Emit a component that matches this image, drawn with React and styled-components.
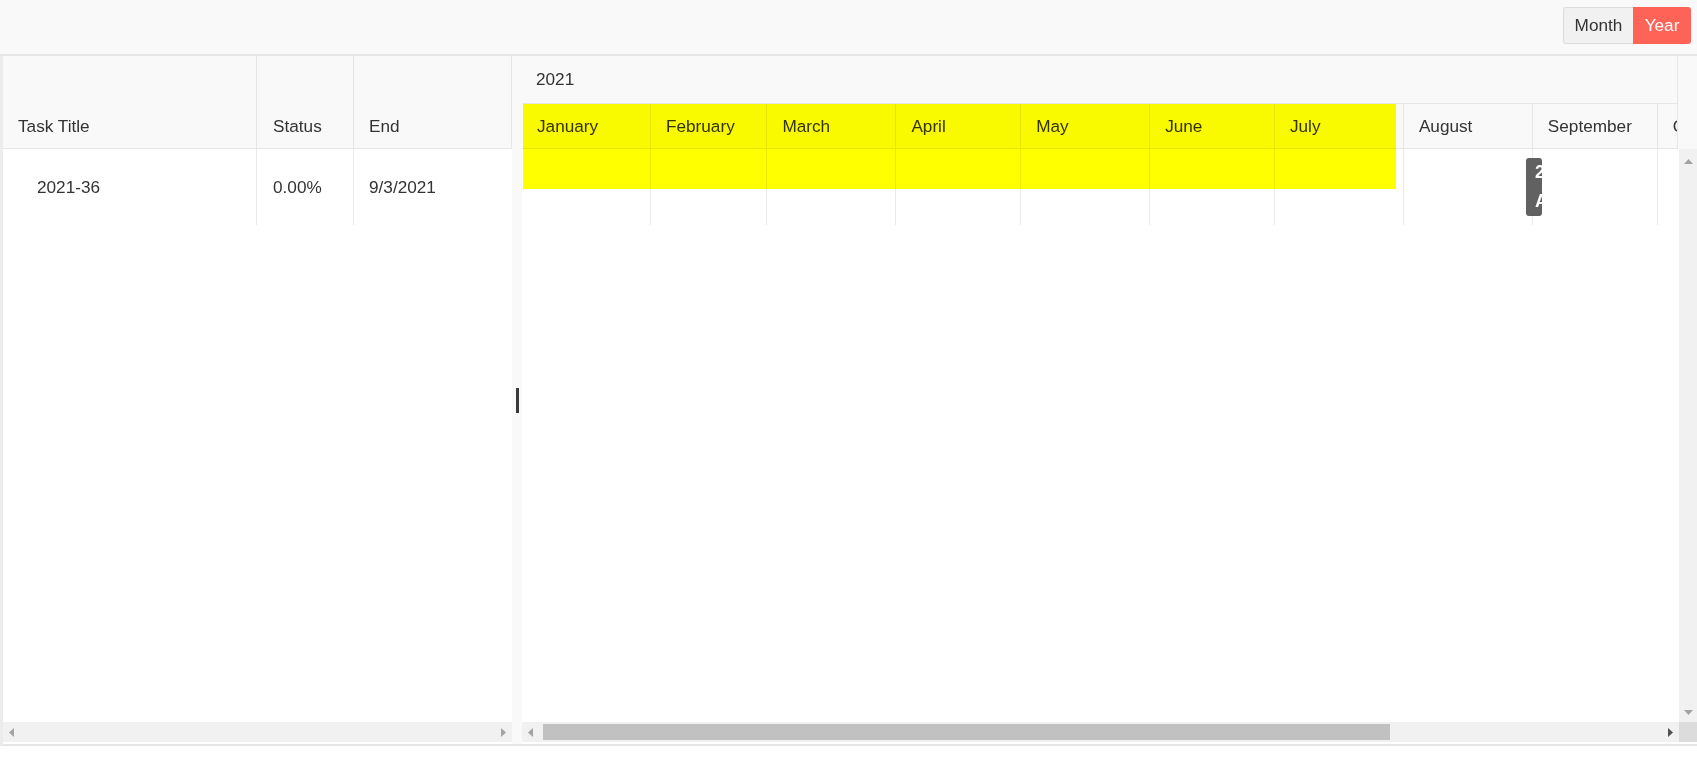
import React from "react";
import styled, { createGlobalStyle } from "styled-components";

const GlobalStyle = createGlobalStyle`
  html, body { margin: 0; padding: 0; background: #fff; }
  body {
    font-family: "Liberation Sans", Arial, sans-serif;
    font-size: 17.2px;
    color: #333;
  }
  * { box-sizing: border-box; }
`;

const PX_PER_DAY = 4.16;
const MONTHS = [
  ["January", 31], ["February", 28], ["March", 31], ["April", 30],
  ["May", 31], ["June", 30], ["July", 31], ["August", 31],
  ["September", 30], ["October", 31], ["November", 30], ["December", 31],
];

const Page = styled.div`
  width: 1697px;
`;

const Toolbar = styled.div`
  height: 56px;
  background: #f9f9f9;
  border-bottom: 2px solid #e6e6e6;
  display: flex;
  justify-content: flex-end;
  align-items: flex-start;
  padding: 7px 6px 0 0;
`;

const SegGroup = styled.div`
  display: flex;
  height: 37px;
`;

const SegButton = styled.div`
  display: flex;
  align-items: center;
  justify-content: center;
  width: ${(p) => p.$w}px;
  background: ${(p) => (p.$active ? "#ff6358" : "#f1f1f1")};
  color: ${(p) => (p.$active ? "#fff" : "#333")};
  border: ${(p) => (p.$active ? "none" : "1px solid #dcdcdc")};
  border-right: none;
  border-radius: ${(p) => (p.$active ? "0 3px 3px 0" : "3px 0 0 3px")};
`;

const Main = styled.div`
  display: flex;
  height: 690px;
  border-left: 3px solid #ececec;
  border-bottom: 2px solid #e6e6e6;
`;

const LeftPane = styled.div`
  width: 509px;
  display: flex;
  flex-direction: column;
  padding-bottom: 2px;
`;

const GridHeader = styled.div`
  height: 93px;
  display: flex;
  background: #f9f9f9;
  border-bottom: 1px solid #e6e6e6;
`;

const HeaderCell = styled.div`
  width: ${(p) => p.$w}px;
  display: flex;
  align-items: flex-end;
  padding: 0 0 12px ${(p) => p.$pad || 15}px;
  line-height: 20px;
  border-right: 1px solid #e6e6e6;
`;

const GridBody = styled.div`
  flex: 1;
  background: #fff;
`;

const GridRow = styled.div`
  height: 76px;
  display: flex;
`;

const GridCell = styled.div`
  width: ${(p) => p.$w}px;
  display: flex;
  align-items: center;
  padding-left: ${(p) => p.$pad || 15}px;
  border-right: ${(p) => (p.$last ? "none" : "1px solid #ebebeb")};
`;

const HScroll = styled.div`
  height: 20px;
  display: flex;
  background: #f1f1f1;
`;

const ArrowBtn = styled.div`
  width: 17px;
  display: flex;
  align-items: center;
  justify-content: center;
  flex-shrink: 0;
`;

const TrackFill = styled.div`
  flex: 1;
  display: flex;
  align-items: center;
`;

const Thumb = styled.div`
  width: 847px;
  height: 16px;
  margin-left: 4px;
  background: #c1c1c1;
`;

const Corner = styled.div`
  width: 18px;
  background: #dcdcdc;
`;

const Splitter = styled.div`
  width: 10px;
  background: #f9f9f9;
  display: flex;
  align-items: center;
  justify-content: center;
`;

const Handle = styled.div`
  width: 3px;
  height: 25px;
  background: #3a3a3a;
`;

const GanttPane = styled.div`
  flex: 1;
  position: relative;
  display: flex;
  flex-direction: column;
  padding-bottom: 2px;
  min-width: 0;
`;

const GanttHeader = styled.div`
  height: 93px;
  display: flex;
  background: #f9f9f9;
`;

const HeaderTimeline = styled.div`
  width: 1156px;
  border-right: 1px solid #e6e6e6;
  overflow: hidden;
  display: flex;
  flex-direction: column;
`;

const YearRow = styled.div`
  height: 48px;
  border-bottom: 1px solid #e6e6e6;
  display: flex;
  align-items: center;
  padding-left: 14px;
`;

const MonthRow = styled.div`
  height: 45px;
  border-bottom: 1px solid #e6e6e6;
  display: flex;
`;

const MonthCell = styled.div`
  flex-shrink: 0;
  display: flex;
  align-items: center;
  padding-left: 15px;
  border-right: 1px solid #e6e6e6;
  white-space: nowrap;
  overflow: hidden;
`;

const GanttBody = styled.div`
  flex: 1;
  display: flex;
  min-height: 0;
`;

const BodyCanvas = styled.div`
  width: 1157px;
  position: relative;
  overflow: hidden;
  background: #fff;
`;

const BodyRow = styled.div`
  height: 76px;
  display: flex;
`;

const BodyCell = styled.div`
  flex-shrink: 0;
  border-right: 1px solid #ebebeb;
`;

const VScroll = styled.div`
  width: 18px;
  background: #f1f1f1;
  display: flex;
  flex-direction: column;
  justify-content: space-between;
  align-items: center;
  padding: 10px 0 7px 1px;
`;

const Highlight = styled.div`
  position: absolute;
  left: 1px;
  top: 48px;
  width: 873px;
  height: 85px;
  background: #ffff00;
  mix-blend-mode: multiply;
  pointer-events: none;
`;

const TaskLabel = styled.div`
  position: absolute;
  left: 1004px;
  top: 9px;
  width: 16px;
  height: 58px;
  border-radius: 3px;
  background: #616161;
  color: #fff;
  font-weight: bold;
  font-size: 18px;
  line-height: 29px;
  padding-left: 9px;
  overflow: hidden;
  white-space: nowrap;
`;

const Tri = ({ dir, color = "#a3a3a3" }) => {
  const shapes = {
    left: { w: 5, h: 9, d: "M5 0 L0 4.5 L5 9 Z" },
    right: { w: 5, h: 9, d: "M0 0 L5 4.5 L0 9 Z" },
    up: { w: 9, h: 5, d: "M0 5 L4.5 0 L9 5 Z" },
    down: { w: 9, h: 5, d: "M0 0 L4.5 5 L9 0 Z" },
  };
  const s = shapes[dir];
  return (
    <svg width={s.w} height={s.h} viewBox={`0 0 ${s.w} ${s.h}`}>
      <path d={s.d} fill={color} />
    </svg>
  );
};

export default function App() {
  return (
    <Page>
      <GlobalStyle />
      <Toolbar>
        <SegGroup>
          <SegButton $w={70}>Month</SegButton>
          <SegButton $w={58} $active>Year</SegButton>
        </SegGroup>
      </Toolbar>
      <Main>
        <LeftPane>
          <GridHeader>
            <HeaderCell $w={254}>Task Title</HeaderCell>
            <HeaderCell $w={97} $pad={16}>Status</HeaderCell>
            <HeaderCell $w={158}>End</HeaderCell>
          </GridHeader>
          <GridBody>
            <GridRow>
              <GridCell $w={254} $pad={34}>2021-36</GridCell>
              <GridCell $w={97} $pad={16}>0.00%</GridCell>
              <GridCell $w={158} $last>9/3/2021</GridCell>
            </GridRow>
          </GridBody>
          <HScroll>
            <ArrowBtn><Tri dir="left" /></ArrowBtn>
            <TrackFill />
            <ArrowBtn><Tri dir="right" /></ArrowBtn>
          </HScroll>
        </LeftPane>
        <Splitter>
          <Handle />
        </Splitter>
        <GanttPane>
          <GanttHeader>
            <HeaderTimeline>
              <YearRow>2021</YearRow>
              <MonthRow>
                {MONTHS.map(([name, days]) => (
                  <MonthCell key={name} style={{ width: days * PX_PER_DAY }}>
                    {name}
                  </MonthCell>
                ))}
              </MonthRow>
            </HeaderTimeline>
          </GanttHeader>
          <GanttBody>
            <BodyCanvas>
              <BodyRow>
                {MONTHS.map(([name, days]) => (
                  <BodyCell key={name} style={{ width: days * PX_PER_DAY }} />
                ))}
              </BodyRow>
              <TaskLabel>
                <div>2021-36</div>
                <div>Aug</div>
              </TaskLabel>
            </BodyCanvas>
            <VScroll>
              <Tri dir="up" />
              <Tri dir="down" />
            </VScroll>
          </GanttBody>
          <HScroll>
            <TrackFill>
              <ArrowBtn><Tri dir="left" /></ArrowBtn>
              <Thumb />
              <div style={{ flex: 1 }} />
              <ArrowBtn><Tri dir="right" color="#505050" /></ArrowBtn>
            </TrackFill>
            <Corner />
          </HScroll>
          <Highlight />
        </GanttPane>
      </Main>
    </Page>
  );
}
